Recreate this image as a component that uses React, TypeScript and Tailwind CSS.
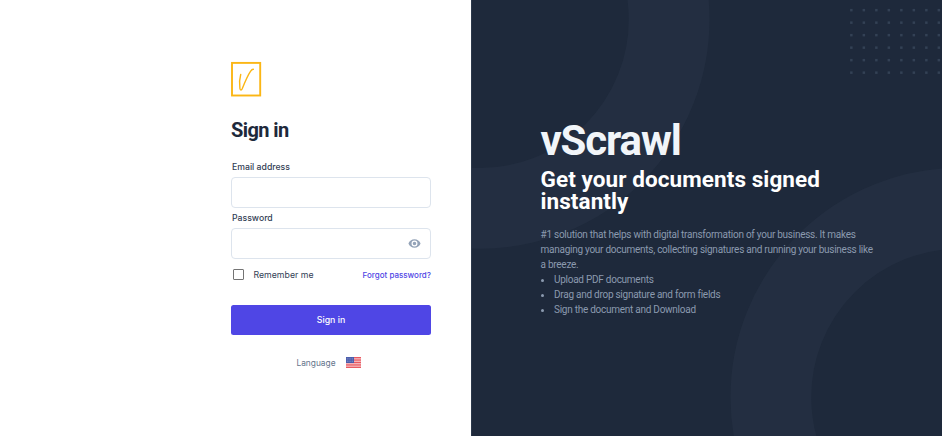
const dotRows = [0, 1, 2, 3, 4, 5];
const dotCols = [0, 1, 2, 3, 4, 5, 6, 7];
const features = ["Upload PDF documents", "Drag and drop signature and form fields", "Sign the document and Download"];

function Logo() {
  return (
    <svg className="block h-[36px] w-[31px]" viewBox="0 0 31 36" fill="none" stroke="#fbb615">
      <rect x="1" y="1.9" width="28.2" height="32.6" strokeWidth="1.9" />
      <path d="M9.700 13.500C8.700 17 8.200 23 8.900 27.500C9.200 29.400 10.500 29.400 11.200 27.800C13.500 22 16.500 14.500 19.500 10.300C20.500 8.900 21.400 8.200 22.300 8.300" strokeWidth="1.400" strokeLinecap="round" />
    </svg>
  );
}

function Eye() {
  return (
    <svg className="size-[13px]" viewBox="0 0 24 24" fill="#94a3b8">
      <path d="M12 4C6.8 4 2.4 7.3.8 12c1.6 4.700 6 8 11.200 8s9.600-3.300 11.200-8C21.600 7.300 17.200 4 12 4zm0 13.500a5.500 5.500 0 1 1 0-11 5.500 5.500 0 0 1 0 11zm0-8.800a3.300 3.300 0 1 0 0 6.600 3.300 3.300 0 0 0 0-6.600z" />
    </svg>
  );
}

function Flag() {
  return (
    <svg className="h-[11px] w-[15px]" viewBox="0 0 15 11">
      <rect width="15" height="11" fill="#f9d5d8" />
      {[0, 1, 2, 3, 4, 5, 6].map((i) => (
        <rect key={i} y={i * 1.692} width="15" height="0.85" fill="#e6444d" />
      ))}
      <rect width="8" height="6" fill="#4a5cab" />
      {[0, 1, 2].map((r) =>
        [0, 1, 2, 3].map((c) => <circle key={`${r}${c}`} cx={1.2 + c * 1.850} cy={1.200 + r * 1.750} r="0.4" fill="#c2cae8" />)
      )}
    </svg>
  );
}

function Backdrop() {
  return (
    <>
      <svg className="pointer-events-none absolute top-0 left-0 h-[436px] w-[475px]" viewBox="0 0 960 540" preserveAspectRatio="xMidYMax slice" fill="none" stroke="#334155" strokeOpacity="0.25" strokeWidth="100">
        <circle cx="196" cy="24" r="234" />
        <circle cx="790" cy="492" r="234" />
      </svg>
      <svg className="pointer-events-none absolute top-0 right-0 h-[80px] w-[93px]" viewBox="0 0 93 80" fill="#334155">
        {dotRows.map((r) => dotCols.map((c) => <rect key={`${r}-${c}`} x={1.1 + c * 12.5} y={8.900 + r * 12.5} width="2.5" height="2.5" />))}
      </svg>
    </>
  );
}

export default function App() {
  return (
    <div className="flex h-[436px] w-[942px] overflow-hidden bg-white font-['Roboto',sans-serif]">
      <main className="flex w-[471px] justify-end pr-[40px]">
        <div className="flex w-[200px] flex-col pt-[61px]">
          <Logo />
          <h1 className="mt-[21px] text-[20px] leading-[25px] font-bold tracking-[-0.6px] text-[#1e293b]">Sign in</h1>
          <label className="mt-[18px] pl-px font-['Inter',sans-serif] text-[8.7px] leading-[12px] font-medium text-[#334155]">Email address</label>
          <div className="mt-[4px] h-[31px] rounded-[4px] border border-[#dde4ed] bg-white" />
          <label className="mt-[4px] pl-px font-['Inter',sans-serif] text-[8.7px] leading-[12px] font-medium text-[#334155]">Password</label>
          <div className="mt-[4px] flex h-[31px] items-center justify-end rounded-[4px] border border-[#dde4ed] bg-white pr-[9px]">
            <Eye />
          </div>
          <div className="mt-[8px] flex h-[16px] items-center font-['Inter',sans-serif] text-[8.75px]">
            <span className="mb-px ml-[2px] size-[11px] rounded-[1px] border border-[#747474]" />
            <span className="ml-[9.500px] pt-px text-[#334155]">Remember me</span>
            <a className="ml-auto text-[8px] font-medium text-[#4f46e5]">Forgot password?</a>
          </div>
          <button className="mt-[22px] h-[30px] rounded-[2.500px] bg-[#4f46e5] pt-px font-['Inter',sans-serif] text-[8.75px] font-medium text-white">Sign in</button>
          <div className="mt-[21px] flex h-[13px] items-center justify-center gap-[10px] pr-[5px] text-[8.400px] text-[#64748b]">
            <span className="pt-px font-['Inter',sans-serif]">Language</span>
            <Flag />
          </div>
        </div>
      </main>
      <aside className="relative w-[471px] overflow-hidden border-l border-[#2b384b] bg-[#1e293b]">
        <Backdrop />
        <div className="relative ml-[68.500px] w-[336px] pt-[120px]">
          <h2 className="text-[42px] leading-[42px] font-bold tracking-[-1.150px] text-[#f1f5f9]">vScrawl</h2>
          <h3 className="mt-[6px] text-[22.500px] leading-[22px] font-bold tracking-[0.080px] text-white">Get your documents signed instantly</h3>
          <div className="mt-[15px] text-[10px] leading-[15px] tracking-[-0.260px] text-[#8b9aaf]">
            <p>#1 solution that helps with digital transformation of your business. It makes managing your documents, collecting signatures and running your business like a breeze.</p>
            <ul>
              {features.map((f) => (
                <li key={f} className="flex items-center">
                  <span className="mt-px mr-[10.500px] size-[3px] rounded-full bg-[#8b9aaf]" />
                  {f}
                </li>
              ))}
            </ul>
          </div>
        </div>
      </aside>
    </div>
  );
}
